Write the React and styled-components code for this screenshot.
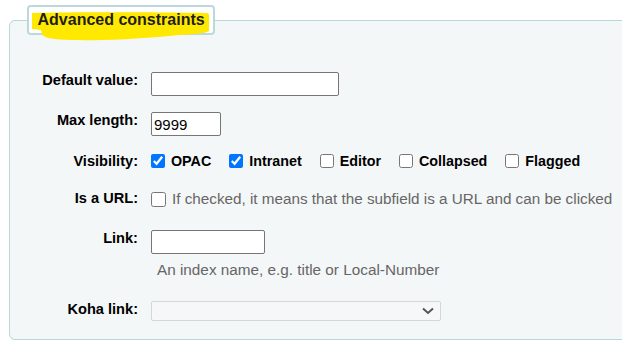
import React from "react";
import styled, { createGlobalStyle } from "styled-components";

const Global = createGlobalStyle`
  html, body { margin: 0; padding: 0; background: #ffffff; overflow: hidden; }
  body { font-family: "Liberation Sans", Arial, sans-serif; width: 622px; height: 347px; }
`;

const Fieldset = styled.fieldset`
  box-sizing: border-box;
  width: 720px;
  margin: 5px 0 0 9px;
  padding: 0 0 18px 0;
  border: 1px solid #b8d7da;
  border-radius: 6px;
  background: #f4f7f8;
  min-width: 0;
`;

const Legend = styled.legend`
  position: relative;
  box-sizing: border-box;
  margin-left: 17px;
  height: 30px;
  padding: 0 8.5px;
  border: 2px solid #bcd8dc;
  border-radius: 4px;
  background: #ffffff;
  font-size: 16px;
  font-weight: bold;
  line-height: 26px;
  color: #1e1e1e;
`;

const Highlight = styled.svg`
  position: absolute;
  left: 0;
  top: 0;
  width: 188px;
  height: 36px;
  pointer-events: none;
`;

const LegendText = styled.span`
  position: relative;
`;

const List = styled.ol`
  list-style: none;
  margin: 0;
  padding: 0;
`;

const Row = styled.li`
  display: grid;
  grid-template-columns: 128px 1fr;
  column-gap: 12px;
  align-items: start;
  margin-top: ${(p) => p.$mt}px;
`;

const Label = styled.label`
  text-align: right;
  font-size: 14.6px;
  font-weight: bold;
  line-height: 16px;
  color: #000;
  white-space: nowrap;
`;

const Control = styled.div`
  display: flex;
  flex-direction: column;
  align-items: flex-start;
`;

const TextInput = styled.input`
  box-sizing: border-box;
  width: ${(p) => p.$w}px;
  height: 24px;
  margin: 0 0 0 1px;
  padding: 1px 2px;
  border: 1px solid #767676;
  border-radius: 2px;
  background: #fff;
  font-family: "Liberation Sans", Arial, sans-serif;
  font-size: 15px;
  color: #000;
  outline: none;
`;

const CheckGroup = styled.div`
  display: flex;
  align-items: center;
  gap: 17px;
  height: 16px;
  margin-top: ${(p) => p.$offset || 0}px;
`;

const CheckItem = styled.span`
  display: inline-flex;
  align-items: center;
  gap: 6px;
  font-size: ${(p) => (p.$plain ? "15.25px" : "14.3px")};
  line-height: 16px;
  font-weight: ${(p) => (p.$plain ? "normal" : "bold")};
  color: ${(p) => (p.$plain ? "#666" : "#000")};
  white-space: nowrap;
`;

const Check = styled.input`
  width: ${(p) => p.$size || 14}px;
  height: ${(p) => p.$size || 14}px;
  margin: 0 0 0 1px;
  accent-color: #0075ff;
`;

const Hint = styled.div`
  margin: 8px 0 0 7px;
  font-size: 15.3px;
  line-height: 16px;
  color: #666;
`;

const SelectBox = styled.div`
  box-sizing: border-box;
  position: relative;
  width: 290px;
  height: 20px;
  margin-left: 1px;
  border: 1px solid #d4d6d8;
  border-radius: 2px;
  background: #f5f7f8;
`;

const Chevron = styled.svg`
  position: absolute;
  right: 6px;
  top: 5px;
  width: 12px;
  height: 8px;
`;

export default function App() {
  return (
    <>
      <Global />
      <Fieldset>
        <Legend>
          <Highlight viewBox="0 0 188 36">
            <path
              d="M3 6 C40 5 120 5 178 6 L180 7 L180 24 C176 27 165 27 150 28 C120 31 80 34 50 33 C30 33 17 32 13 28 L12 23 L3 22 Z"
              fill="#ffe900"
            />
          </Highlight>
          <LegendText>Advanced constraints</LegendText>
        </Legend>
        <List>
          <Row $mt={37}>
            <Label>Default value:</Label>
            <Control>
              <TextInput $w={188} defaultValue="" />
            </Control>
          </Row>
          <Row $mt={16}>
            <Label>Max length:</Label>
            <Control>
              <TextInput $w={70} defaultValue="9999" />
            </Control>
          </Row>
          <Row $mt={17}>
            <Label>Visibility:</Label>
            <Control>
              <CheckGroup>
                <CheckItem>
                  <Check type="checkbox" defaultChecked />
                  OPAC
                </CheckItem>
                <CheckItem>
                  <Check type="checkbox" defaultChecked />
                  Intranet
                </CheckItem>
                <CheckItem>
                  <Check type="checkbox" />
                  Editor
                </CheckItem>
                <CheckItem>
                  <Check type="checkbox" />
                  Collapsed
                </CheckItem>
                <CheckItem>
                  <Check type="checkbox" />
                  Flagged
                </CheckItem>
              </CheckGroup>
            </Control>
          </Row>
          <Row $mt={21}>
            <Label>Is a URL:</Label>
            <Control>
              <CheckGroup $offset={1}>
                <CheckItem $plain>
                  <Check type="checkbox" $size={15} />
                  If checked, it means that the subfield is a URL and can be clicked
                </CheckItem>
              </CheckGroup>
            </Control>
          </Row>
          <Row $mt={23}>
            <Label>Link:</Label>
            <Control>
              <TextInput $w={114} defaultValue="" />
              <Hint>An index name, e.g. title or Local-Number</Hint>
            </Control>
          </Row>
          <Row $mt={23}>
            <Label>Koha link:</Label>
            <Control>
              <SelectBox>
                <Chevron viewBox="0 0 12 8">
                  <path d="M1 1.5 L6 6 L11 1.5" fill="none" stroke="#555" strokeWidth="2" />
                </Chevron>
              </SelectBox>
            </Control>
          </Row>
        </List>
      </Fieldset>
    </>
  );
}
